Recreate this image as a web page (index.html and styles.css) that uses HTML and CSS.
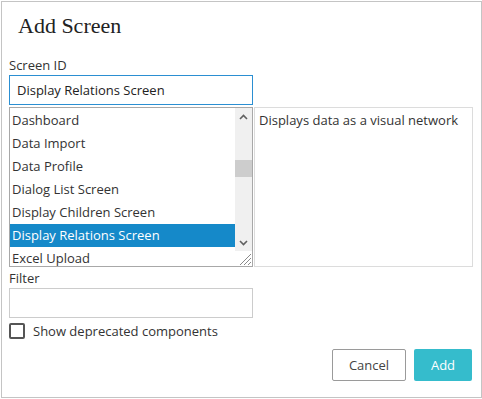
FILE: index.html
```html
<!DOCTYPE html>
<html lang="en">
<head>
  <meta charset="UTF-8">
  <title>Add Screen</title>
  <link rel="stylesheet" href="styles.css">
</head>
<body>
  <div class="dialog">
    <h1 class="dialog-title">Add Screen</h1>

    <div class="dialog-body">
      <label class="field-label" for="screenId">Screen ID</label>
      <input class="text-input focused" id="screenId" type="text" value="Display Relations Screen">

      <!-- list of screens + description -->
      <div class="picker">
        <div class="listbox">
          <ul class="list-items">
            <li>Dashboard</li>
            <li>Data Import</li>
            <li>Data Profile</li>
            <li>Dialog List Screen</li>
            <li>Display Children Screen</li>
            <li class="selected">Display Relations Screen</li>
            <li>Excel Upload</li>
          </ul>
          <div class="scrollbar">
            <div class="scroll-btn">
              <svg width="9" height="6" viewBox="0 0 9 6"><polyline points="1,5 4.5,1.5 8,5" fill="none" stroke="#606060" stroke-width="1.6"/></svg>
            </div>
            <div class="scroll-track">
              <div class="scroll-thumb"></div>
            </div>
            <div class="scroll-btn">
              <svg width="9" height="6" viewBox="0 0 9 6"><polyline points="1,1 4.5,4.5 8,1" fill="none" stroke="#606060" stroke-width="1.6"/></svg>
            </div>
            <div class="grip">
              <svg width="15" height="15" viewBox="0 0 15 15">
                <line x1="3" y1="14" x2="14" y2="3" stroke="#8a8a8a"/>
                <line x1="7" y1="14" x2="14" y2="7" stroke="#8a8a8a"/>
                <line x1="11" y1="14" x2="14" y2="11" stroke="#8a8a8a"/>
              </svg>
            </div>
          </div>
        </div>
        <div class="description">Displays data as a visual network</div>
      </div>

      <label class="field-label filter-label" for="filter">Filter</label>
      <input class="text-input" id="filter" type="text">

      <label class="check-row">
        <span class="checkbox"></span>
        Show deprecated components
      </label>
    </div>

    <div class="dialog-actions">
      <button class="btn">Cancel</button>
      <button class="btn primary">Add</button>
    </div>
  </div>
</body>
</html>
```

FILE: styles.css
```css
* { box-sizing: border-box; }

body {
  margin: 0;
  background: #fff;
  font-family: 'Open Sans', 'Noto Sans', sans-serif;
  font-size: 13px;
  color: #333;
}

.dialog {
  margin: 1px 0 0 1px;
  width: 481px;
  height: 397px;
  border: 1px solid #c4c4c4;
  background: #fff;
  padding: 0 8px 0 7px;
}

.dialog-title {
  margin: 11px 0 0 0;
  padding-left: 9px;
  font-family: 'Liberation Serif', serif;
  font-weight: normal;
  font-size: 22px;
  line-height: 26px;
  color: #222;
}

.dialog-body {
  display: flex;
  flex-direction: column;
  margin-top: 17px;
}

.field-label {
  line-height: 18px;
  color: #333;
}

.filter-label {
  margin-top: 2px;
}

.text-input {
  margin-top: 1px;
  width: 244px;
  height: 30px;
  border: 1px solid #ccc;
  padding: 0 7px;
  font-family: inherit;
  font-size: 13px;
  color: #222;
  outline: none;
}

.text-input.focused {
  border-color: #2b8fd2;
}

.picker {
  display: flex;
  gap: 1px;
  margin-top: 2px;
  height: 160px;
}

.listbox {
  display: flex;
  width: 244px;
  border: 1px solid #a8a8a8;
  background: #fff;
}

.list-items {
  list-style: none;
  margin: 0;
  padding: 1px 0 0 0;
  width: 225px;
  overflow: hidden;
}

.list-items li {
  height: 23px;
  line-height: 23px;
  padding-left: 2px;
  white-space: nowrap;
  color: #333;
}

.list-items li.selected {
  background: #1589c9;
  color: #fff;
}

.scrollbar {
  width: 17px;
  display: flex;
  flex-direction: column;
}

.scroll-btn {
  height: 17px;
  background: #f0f0f0;
  display: flex;
  align-items: center;
  justify-content: center;
}

.scroll-track {
  flex: 1;
  background: #f0f0f0;
}

.scroll-thumb {
  margin-top: 35px;
  height: 17px;
  background: #cdcdcd;
}

.grip {
  height: 15px;
  background: #fff;
  display: flex;
  justify-content: flex-end;
}

.description {
  width: 219px;
  border: 1px solid #dcdcdc;
  padding: 1px 4px;
  line-height: 23px;
  color: #333;
}

.check-row {
  display: flex;
  align-items: center;
  gap: 8px;
  margin-top: 5px;
  height: 16px;
  line-height: 16px;
  color: #333;
}

.checkbox {
  width: 16px;
  height: 16px;
  border: 2px solid #555;
  border-radius: 2px;
  background: #fff;
}

.dialog-actions {
  display: flex;
  justify-content: flex-end;
  gap: 8px;
  margin-top: 10px;
  padding-right: 1px;
}

.btn {
  height: 32px;
  width: 74px;
  border: 1px solid #9a9a9a;
  border-radius: 2px;
  background: #fff;
  font-family: inherit;
  font-size: 13px;
  color: #444;
  cursor: pointer;
}

.btn.primary {
  width: 58px;
  border: none;
  background: #35bccc;
  color: #fff;
}
```
